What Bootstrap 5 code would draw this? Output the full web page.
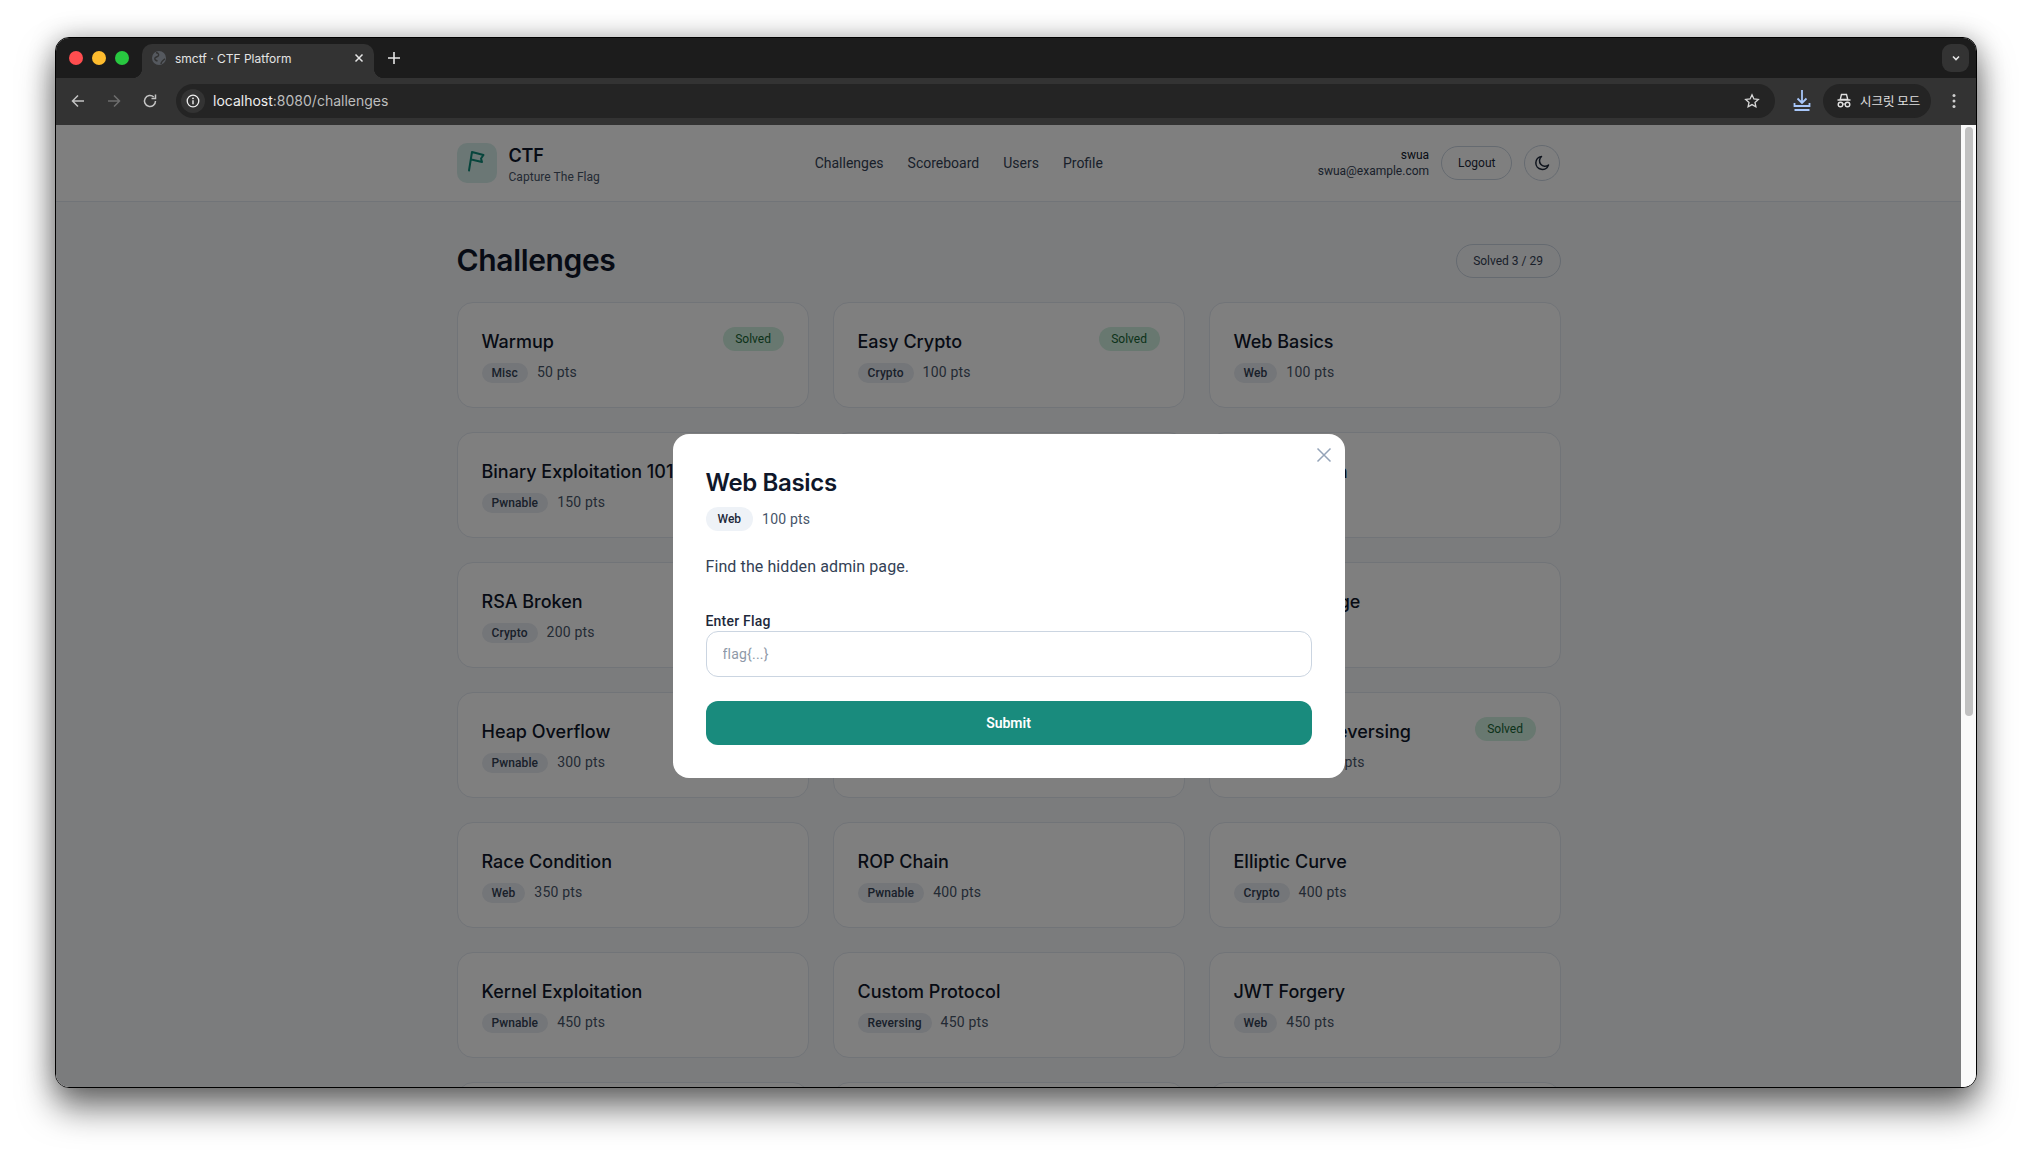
<!DOCTYPE html>
<html lang="en">
<head>
  <meta charset="UTF-8" />
  <title>smctf · CTF Platform</title>
  <link href="https://cdn.jsdelivr.net/npm/bootstrap@5.3.3/dist/css/bootstrap.min.css" rel="stylesheet" />
  <style>
    html, body { height: 100%; }
    body { background: #fff; overflow: hidden; font-family: "Roboto", "Liberation Sans", sans-serif; color: #0f172a; }

    /* browser frame */
    .app-window { margin: 37px 0 0 55px; width: 1922px; height: 1051px; border: 1px solid #000; border-radius: 14px; overflow: hidden; box-shadow: 0 20px 35px rgba(0,0,0,.55), 0 0 26px rgba(0,0,0,.25); background: #fafafa; }
    .tab-strip { height: 40px; background: #1c1c1c; padding: 6px 7px 0 13px; }
    .traffic { width: 14px; height: 14px; border-radius: 50%; margin-right: 9px; margin-top: 7px; }
    .traffic-red { background: #ff4d4f; }
    .traffic-yellow { background: #febc2e; }
    .traffic-green { background: #28c840; }
    .browser-tab { width: 232px; height: 34px; margin-left: 4px; background: #333; border-radius: 10px 10px 0 0; padding: 0 9px 6px; color: #e4e4e4; font: 12px "Inter", sans-serif; position: relative; }
    .browser-tab::before, .browser-tab::after { content: ""; position: absolute; bottom: 0; width: 10px; height: 10px; }
    .browser-tab::before { left: -10px; background: radial-gradient(circle at 0 0, #1c1c1c 10px, #333 10.5px); }
    .browser-tab::after { right: -10px; background: radial-gradient(circle at 100% 0, #1c1c1c 10px, #333 10.5px); }
    .tab-title { margin-left: 8px; }
    .new-tab { margin: 4px 0 0 10px; }
    .tab-list { width: 27px; height: 28px; border-radius: 9px; background: #333; }
    .tool-strip { height: 47px; background: #333; padding: 0 8px 2px 4px; }
    .tool-icon { width: 36px; display: flex; justify-content: center; }
    .omnibox { width: 1599px; height: 34px; margin-left: 8px; background: #242424; border-radius: 17px; padding: 0 15px 0 5px; font: 14px "Inter", sans-serif; color: #bdbdbd; }
    .omnibox-host { color: #eee; }
    .info-chip { width: 24px; height: 24px; border-radius: 50%; background: #333; margin-right: 8px; }
    .save-icon { margin-left: 17px; }
    .incognito-chip { width: 108px; height: 34px; margin-left: 11px; background: #242424; border-radius: 17px; padding-left: 13px; gap: 8px; color: #e0e0e0; font: 12.500px "Noto Sans CJK KR", sans-serif; }
    .kebab { margin-left: 20px; }

    /* page */
    .viewport { height: 962px; }
    .page-area { width: 1905px; position: relative; overflow: hidden; background: #f7f8fa; }
    .fake-scroll { width: 15px; background: #fafafa; padding: 2px 3px 0 4px; }
    .fake-thumb { height: 589px; background: #c1c1c1; border-radius: 4px; }
    .site-header { height: 77px; background: #fff; border-bottom: 1px solid #e2e8f0; }
    .site-wrap { width: 1152px; margin: 0 auto; padding: 0 24px; }
    .logo-box { width: 40px; height: 40px; border-radius: 10px; background: #d7efeb; margin-right: 12px; }
    .brand-text { padding-top: 4px; }
    .brand-name { font: 600 18px/22px "Inter", sans-serif; letter-spacing: -.2px; color: #0f172a; }
    .brand-sub { font-size: 12px; line-height: 16px; margin-top: 2px; color: #475569; letter-spacing: .05px; }
    .site-nav { gap: 24px; font-size: 14px; }
    .site-nav a { color: #334155; text-decoration: none; }
    .user-info { font-size: 12px; line-height: 16px; color: #334155; text-align: right; margin-right: 12px; }
    .user-info div:first-child { color: #0f172a; }
    .pill-btn { height: 34px; padding: 0 16px; border: 1px solid #cbd5e1; border-radius: 17px; background: transparent; font-size: 12px; color: #1e293b; }
    .moon-btn { width: 36px; height: 36px; margin-left: 12px; padding: 0; border-radius: 50%; }
    .page-title { font: 600 30px/36px "Inter", sans-serif; letter-spacing: -.35px; margin: 0; }
    .title-row { padding-top: 40px; margin-bottom: 24px; }
    .solved-count { margin-top: 2px; padding: 0 16.500px; height: 34px; line-height: 32px; border: 1px solid #cbd5e1; border-radius: 17px; font-size: 12px; color: #334155; }
    .chal-card { height: 106px; border: 1px solid #e2e8f0; border-radius: 16px; background: #fff; padding: 24px; }
    .chal-name { font: 500 18px/27px "Inter", sans-serif; padding-top: 1px; color: #0f172a; margin: 0; }
    .solved-tag { height: 24px; line-height: 24px; padding: 0 12.500px; border-radius: 12px; background: #d1f0e0; color: #166534; font-size: 12px; }
    .chip-row { margin-top: 7px; }
    .cat-chip { height: 20px; line-height: 20px; padding: 0 10px; border-radius: 10px; background: #e8ecf2; color: #334155; font-size: 12px; font-weight: 500; letter-spacing: .1px; margin-right: 9px; }
    .chal-pts { font-size: 14px; color: #475569; letter-spacing: .2px; }

    /* dialog */
    .dim-layer { position: absolute; inset: 0; background: rgba(0,0,0,.5); }
    .flag-dialog { width: 672px; height: 344px; border-radius: 16px; background: #fff; padding: 33px 33px 32px; position: relative; }
    .close-x { position: absolute; top: 12px; right: 12px; padding: 0; border: 0; background: none; line-height: 0; }
    .dialog-title { font: 600 24px/28px "Inter", sans-serif; letter-spacing: -.35px; color: #0f172a; margin: 2px 0 10px; }
    .dialog-chip { height: 24px; line-height: 24px; padding: 0 12px; border-radius: 12px; background: #eef2f7; color: #1e293b; font-size: 12px; font-weight: 500; margin-right: 9px; }
    .dialog-text { font-size: 16px; line-height: 24px; color: #334155; letter-spacing: .1px; margin: 24px 0 0; }
    .flag-label { display: block; font-size: 14px; line-height: 20px; font-weight: 500; color: #1e293b; letter-spacing: .2px; margin: 32px 0 0; }
    .flag-input { height: 46px; margin-bottom: 24px; padding: 0 16px; border: 1px solid #cbd5e1; border-radius: 12px; font-size: 14px; color: #0f172a; }
    .flag-input::placeholder { color: #8e99a8; letter-spacing: .2px; }
    .submit-btn { height: 44px; padding-top: 6px; background: #198b7d; border-radius: 12px; border: 0; font-size: 14px; font-weight: 600; color: #fff; }
  </style>
</head>
<body>
  <div class="app-window d-flex flex-column">
    <div class="tab-strip d-flex flex-shrink-0">
      <span class="traffic traffic-red"></span>
      <span class="traffic traffic-yellow"></span>
      <span class="traffic traffic-green"></span>
      <div class="browser-tab d-flex align-items-center">
        <svg width="16" height="16" viewBox="0 0 16 16"><circle cx="8" cy="8" r="7" fill="#55595f"/><path d="M5 2.500c2 .5 3 1.500 2.500 3S5 6.500 4 8s1 2.500 2.500 3M10 14c0-2 1-2.500 2-3.500s1.500-1.500 2-1.500" stroke="#333" stroke-width="1.400" fill="none"/></svg>
        <span class="tab-title flex-grow-1">smctf · CTF Platform</span>
        <svg width="12" height="12" viewBox="0 0 12 12"><path d="M2.500 2.500l7 7M9.500 2.500l-7 7" stroke="#e6e6e6" stroke-width="1.500"/></svg>
      </div>
      <svg class="new-tab" width="20" height="20" viewBox="0 0 20 20"><path d="M10 4v12M4 10h12" stroke="#e6e6e6" stroke-width="1.600"/></svg>
      <div class="tab-list ms-auto d-flex align-items-center justify-content-center">
        <svg width="12" height="12" viewBox="0 0 12 12"><path d="M3 4.500L6 7.500 9 4.500" stroke="#e6e6e6" stroke-width="1.600" fill="none"/></svg>
      </div>
    </div>

    <div class="tool-strip d-flex align-items-center flex-shrink-0">
      <span class="tool-icon"><svg width="16" height="16" viewBox="0 0 16 16"><path d="M14 8H2.500M8 2.500L2.500 8 8 13.500" stroke="#c4c4c4" stroke-width="1.500" fill="none"/></svg></span>
      <span class="tool-icon"><svg width="16" height="16" viewBox="0 0 16 16"><path d="M2 8h11.500M8 2.500L13.500 8 8 13.500" stroke="#6e6e6e" stroke-width="1.500" fill="none"/></svg></span>
      <span class="tool-icon"><svg width="16" height="16" viewBox="0 0 16 16"><path d="M13.500 8A5.500 5.500 0 1 1 11.800 4" stroke="#c4c4c4" stroke-width="1.500" fill="none"/><path d="M13.500 1.500v4h-4" fill="none" stroke="#c4c4c4" stroke-width="1.500"/></svg></span>
      <div class="omnibox d-flex align-items-center">
        <span class="info-chip d-flex align-items-center justify-content-center">
          <svg width="14" height="14" viewBox="0 0 14 14"><circle cx="7" cy="7" r="5.800" stroke="#eee" stroke-width="1.300" fill="none"/><path d="M7 6.200v4" stroke="#eee" stroke-width="1.400"/><circle cx="7" cy="4.300" r=".9" fill="#eee"/></svg>
        </span>
        <span class="flex-grow-1"><span class="omnibox-host">localhost</span>:8080/challenges</span>
        <svg width="16" height="16" viewBox="0 0 16 16"><path d="M8 1.800l1.900 4.100 4.400.5-3.300 3 .9 4.400L8 11.600l-3.900 2.200.9-4.400-3.300-3 4.400-.5z" stroke="#d8d8d8" stroke-width="1.300" fill="none"/></svg>
      </div>
      <span class="save-icon"><svg width="20" height="24" viewBox="0 0 20 24"><path d="M10 1v13M5.500 9.500L10 14l4.500-4.500M2.500 14v3h15v-3" stroke="#a8c7fa" stroke-width="1.800" fill="none"/><path d="M2.500 21h15" stroke="#a8c7fa" stroke-width="2"/></svg></span>
      <div class="incognito-chip d-flex align-items-center">
        <svg width="16" height="16" viewBox="0 0 16 16"><path d="M5.500 1.500h5l1.300 5H4.200zM1.500 7h13" stroke="#e0e0e0" stroke-width="1.400" fill="#242424"/><circle cx="4.500" cy="11.500" r="2.300" stroke="#e0e0e0" stroke-width="1.400" fill="none"/><circle cx="11.500" cy="11.500" r="2.300" stroke="#e0e0e0" stroke-width="1.400" fill="none"/><path d="M6.800 11h2.400" stroke="#e0e0e0" stroke-width="1.200"/></svg>
        <span>시크릿 모드</span>
      </div>
      <span class="kebab"><svg width="6" height="16" viewBox="0 0 6 16"><circle cx="3" cy="2.500" r="1.500" fill="#d0d0d0"/><circle cx="3" cy="8" r="1.500" fill="#d0d0d0"/><circle cx="3" cy="13.500" r="1.500" fill="#d0d0d0"/></svg></span>
    </div>

    <div class="viewport d-flex">
      <div class="page-area">
        <header class="site-header">
          <div class="site-wrap h-100 d-flex align-items-center justify-content-between">
            <div class="d-flex align-items-center">
              <span class="logo-box d-flex">
                <svg width="40" height="40" viewBox="0 0 40 40"><path d="M12 27.500L15 9l11.500 3-2.500 3.500 1 3.500-10.700-2.500" stroke="#0f8a78" stroke-width="2" stroke-linejoin="round" stroke-linecap="round" fill="none"/></svg>
              </span>
              <div class="brand-text">
                <div class="brand-name">CTF</div>
                <div class="brand-sub">Capture The Flag</div>
              </div>
            </div>
            <nav class="site-nav d-flex">
              <a href="#">Challenges</a>
              <a href="#">Scoreboard</a>
              <a href="#">Users</a>
              <a href="#">Profile</a>
            </nav>
            <div class="d-flex align-items-center">
              <div class="user-info">
                <div>swua</div>
                <div>swua@example.com</div>
              </div>
              <button class="pill-btn" type="button">Logout</button>
              <button class="pill-btn moon-btn" type="button">
                <svg width="18" height="18" viewBox="0 0 18 18"><path d="M8.500 2.500a6.500 6.500 0 1 0 7 8.500 5.500 5.500 0 0 1-7-8.500z" stroke="#1e293b" stroke-width="1.500" stroke-linejoin="round" fill="none"/></svg>
              </button>
            </div>
          </div>
        </header>

        <main class="site-wrap">
          <div class="title-row d-flex justify-content-between align-items-center">
            <h1 class="page-title">Challenges</h1>
            <span class="solved-count">Solved 3 / 29</span>
          </div>
          <div class="row row-cols-3 g-4" id="chalGrid"></div>
        </main>

        <div class="dim-layer d-flex align-items-center justify-content-center">
          <div class="flag-dialog">
            <button class="close-x" type="button" aria-label="Close">
              <svg width="18" height="18" viewBox="0 0 18 18"><path d="M2.500 2.500l13 13M15.500 2.500l-13 13" stroke="#94a3b8" stroke-width="1.500"/></svg>
            </button>
            <h2 class="dialog-title">Web Basics</h2>
            <div class="d-flex align-items-center">
              <span class="dialog-chip">Web</span>
              <span class="chal-pts">100 pts</span>
            </div>
            <p class="dialog-text">Find the hidden admin page.</p>
            <label class="flag-label" for="flagInput">Enter Flag</label>
            <input class="form-control flag-input" id="flagInput" type="text" placeholder="flag{...}" />
            <button class="btn submit-btn w-100" type="button">Submit</button>
          </div>
        </div>
      </div>
      <div class="fake-scroll"><div class="fake-thumb"></div></div>
    </div>
  </div>

  <script>
    // rows in the order the grid shows them; name "" = covered by the dialog or cut off
    const challenges = [
      { name: "Warmup", cat: "Misc", pts: 50, solved: true },
      { name: "Easy Crypto", cat: "Crypto", pts: 100, solved: true },
      { name: "Web Basics", cat: "Web", pts: 100 },
      { name: "Binary Exploitation 101", cat: "Pwnable", pts: 150 },
      { name: "" },
      { name: "SQL Injection", cat: "Web", pts: 150 },
      { name: "RSA Broken", cat: "Crypto", pts: 200 },
      { name: "" },
      { name: "XSS Challenge", cat: "Web", pts: 200 },
      { name: "Heap Overflow", cat: "Pwnable", pts: 300 },
      { name: "" },
      { name: "Advanced Reversing", cat: "Reversing", pts: 300, solved: true },
      { name: "Race Condition", cat: "Web", pts: 350 },
      { name: "ROP Chain", cat: "Pwnable", pts: 400 },
      { name: "Elliptic Curve", cat: "Crypto", pts: 400 },
      { name: "Kernel Exploitation", cat: "Pwnable", pts: 450 },
      { name: "Custom Protocol", cat: "Reversing", pts: 450 },
      { name: "JWT Forgery", cat: "Web", pts: 450 },
      { name: "" },
      { name: "" },
      { name: "" }
    ];

    const grid = document.getElementById("chalGrid");
    challenges.forEach(c => {
      const col = document.createElement("div");
      col.className = "col";
      col.innerHTML = !c.name ? `<div class="chal-card"></div>` : `
        <div class="chal-card">
          <div class="d-flex justify-content-between align-items-start">
            <h3 class="chal-name">${c.name}</h3>
            ${c.solved ? `<span class="solved-tag">Solved</span>` : ""}
          </div>
          <div class="chip-row d-flex align-items-center">
            <span class="cat-chip">${c.cat}</span>
            <span class="chal-pts">${c.pts} pts</span>
          </div>
        </div>`;
      grid.appendChild(col);
    });
  </script>

  <script src="https://cdn.jsdelivr.net/npm/bootstrap@5.3.3/dist/js/bootstrap.bundle.min.js"></script>
</body>
</html>
